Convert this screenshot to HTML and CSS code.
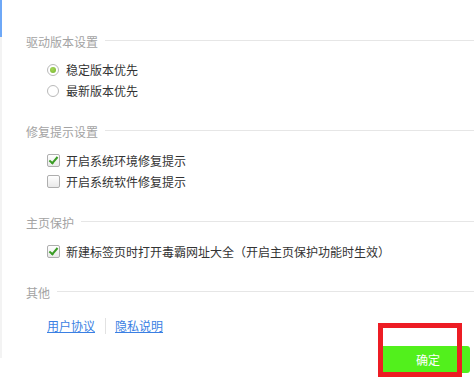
FILE: index.html
```html
<!DOCTYPE html>
<html lang="zh-CN">
<head>
    <meta charset="UTF-8">
    <meta name="viewport" content="width=device-width, initial-scale=1.0">
    <title>设置</title>
    <link rel="stylesheet" href="styles.css">
</head>
<body>
    <div class="panel">
        <div class="section">
            <div class="section-title">驱动版本设置</div>
            <div class="options first">
                <label class="option"><span class="radio checked"></span>稳定版本优先</label>
                <label class="option"><span class="radio"></span>最新版本优先</label>
            </div>
        </div>

        <div class="section">
            <div class="section-title">修复提示设置</div>
            <div class="options">
                <label class="option"><span class="checkbox checked"></span>开启系统环境修复提示</label>
                <label class="option"><span class="checkbox"></span>开启系统软件修复提示</label>
            </div>
        </div>

        <div class="section">
            <div class="section-title">主页保护</div>
            <div class="options">
                <label class="option"><span class="checkbox checked"></span>新建标签页时打开毒霸网址大全（开启主页保护功能时生效）</label>
            </div>
        </div>

        <div class="section last">
            <div class="section-title">其他</div>
            <div class="links">
                <a href="#">用户协议</a>
                <span class="divider"></span>
                <a href="#">隐私说明</a>
            </div>
        </div>

        <div class="footer">
            <button class="ok-btn">确定</button>
        </div>
    </div>

    <div class="highlight"></div>
</body>
</html>
```

FILE: styles.css
```css
body {
    margin: 0;
    background: #fff;
    font-family: "Noto Sans CJK SC", "Microsoft YaHei", sans-serif;
    font-size: 12px;
    color: #333;
    width: 474px;
    height: 377px;
    overflow: hidden;
    position: relative;
}
.panel {
    position: relative;
    height: 358px;
    border-left: 2px solid #f3f3f3;
    padding-top: 32px;
    box-sizing: border-box;
}
.panel::before {
    content: "";
    position: absolute;
    left: -2px;
    top: 0;
    width: 2px;
    height: 37px;
    background: #6ea8f7;
}
.section {
    padding-left: 24px;
    margin-bottom: 21px;
}
.section.last {
    margin-bottom: 0;
}
.section-title {
    display: flex;
    align-items: center;
    height: 20px;
    line-height: 20px;
    color: #a3a3a3;
}
.section-title::after {
    content: "";
    flex: 1;
    height: 1px;
    margin-left: 7px;
    margin-top: -4px;
    background: #e6e6e6;
}
.options {
    margin-top: 8px;
    padding-left: 21px;
}
.options.first {
    margin-top: 7px;
    margin-bottom: 1px;
}
.option {
    display: flex;
    align-items: center;
    height: 21px;
    line-height: 21px;
}
.radio {
    width: 10px;
    height: 10px;
    border: 1px solid #b9b9b9;
    border-radius: 50%;
    background: #fff;
    margin-right: 7px;
    display: flex;
    align-items: center;
    justify-content: center;
}
.radio.checked::after {
    content: "";
    width: 6px;
    height: 6px;
    border-radius: 50%;
    background: radial-gradient(circle at 40% 35%, #a6d65a, #74b52c);
}
.checkbox {
    position: relative;
    width: 11px;
    height: 11px;
    border: 1px solid #aeaeae;
    border-radius: 2px;
    background: linear-gradient(#ffffff, #e9e9e9);
    margin-right: 6px;
}
.checkbox.checked::after {
    content: "";
    position: absolute;
    left: 3px;
    top: 0px;
    width: 3px;
    height: 7px;
    border: solid #3a9c25;
    border-width: 0 2px 2px 0;
    transform: rotate(40deg);
}
.links {
    display: flex;
    align-items: center;
    height: 21px;
    margin-top: 12px;
    padding-left: 21px;
}
.links a {
    color: #3a7fe3;
    text-decoration: underline;
}
.divider {
    width: 1px;
    height: 16px;
    background: #e2e2e2;
    margin: 0 9px 0 10px;
}
.footer {
    display: flex;
    justify-content: flex-end;
    margin-top: 10px;
    padding-right: 4px;
}
.ok-btn {
    width: 90px;
    height: 27px;
    padding: 0 0 0 6px;
    border: none;
    border-radius: 3px;
    background: #52f01c;
    color: #fff;
    font-family: inherit;
    font-size: 12px;
    cursor: pointer;
}
.highlight {
    position: absolute;
    left: 378px;
    top: 323px;
    width: 84px;
    height: 54px;
    border: 5px solid #ed1c24;
    box-sizing: border-box;
}
```
